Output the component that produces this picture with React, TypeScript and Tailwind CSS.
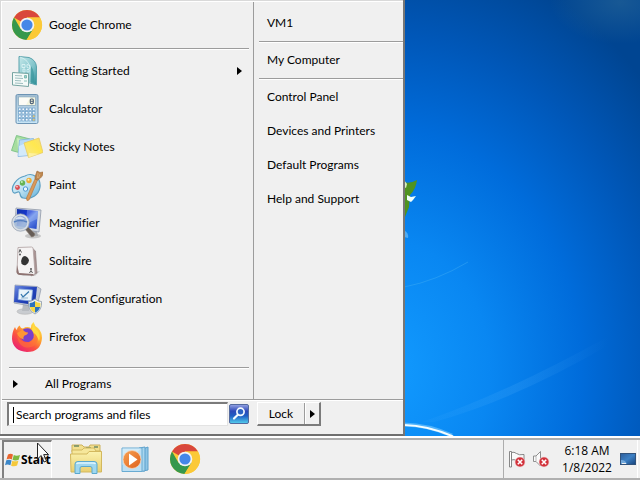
import type { ReactNode } from 'react';

function ChromeIcon() {
  return (
    <svg viewBox="0 0 32 32" className="w-8 h-8 shrink-0" aria-hidden="true">
      <circle cx="16" cy="16" r="15" fill="#fbc937" />
      <path d="M16 16 3 8.500A15 15 0 0 1 29 8.500H16Z" fill="#d9473c" />
      <path d="M3 8.500A15 15 0 0 0 15.500 31L22.500 19.800 16 16 9.500 19.800Z" fill="#36984c" />
      <path d="M29 8.500A15 15 0 0 1 15.500 31L22.500 19.800 16 8.500Z" fill="#fbc937" />
      <circle cx="16" cy="16" r="7.300" fill="#f4f4f4" />
      <circle cx="16" cy="16" r="5.600" fill="#4587e8" />
    </svg>
  );
}

function GettingStartedIcon() {
  return (
    <svg viewBox="0 0 32 32" className="w-8 h-8 shrink-0" aria-hidden="true">
      <defs>
        <linearGradient id="gs" x1="0" y1="0" x2="1" y2="1">
          <stop offset="0" stopColor="#c5e8ea" />
          <stop offset="0.600" stopColor="#7fc3ca" />
          <stop offset="1" stopColor="#298b93" />
        </linearGradient>
      </defs>
      <path d="M8 1.500 18 2.500Q25 5 25.500 12V30L19 28 8 24Z" fill="url(#gs)" stroke="#5aa3ad" strokeWidth="1" />
      <path d="M19 28V13Q18 5 9 2" fill="none" stroke="#dff4f5" strokeWidth="1" opacity="0.700" />
      <path d="M20 11Q24 16 23 28L19.500 27Z" fill="#3a959c" opacity="0.700" />
      <path d="M11 9.500h3v3h-3zM16 9.500l3 1v3l-3-1zM12 14h2v3h-2zM16 14.500h2v2.500h-2z" fill="none" stroke="#e2f6f7" strokeWidth="0.800" />
      <path d="M1.500 17.500 17.500 18.500V31.500L1.500 30Z" fill="#f4faf8" stroke="#77a5a2" strokeWidth="1" />
      <path d="M4 20.500l7 .400M4 23l8 .500M4 25.500l6 .400M4 28l8 .500" stroke="#88aeb0" strokeWidth="0.800" />
      <path d="M13.500 20.500h2v2.500h-2zM13 26h3" stroke="#6fb2aa" strokeWidth="0.800" fill="#9ed0ca" />
    </svg>
  );
}

function CalculatorIcon() {
  return (
    <svg viewBox="0 0 32 32" className="w-8 h-8 shrink-0" aria-hidden="true">
      <defs>
        <linearGradient id="calc" x1="0" y1="0" x2="0" y2="1">
          <stop offset="0" stopColor="#a2bed2" />
          <stop offset="1" stopColor="#c9e6f7" />
        </linearGradient>
      </defs>
      <rect x="5" y="1.500" width="22" height="29" rx="1.500" fill="url(#calc)" stroke="#6d94b4" />
      <rect x="7.500" y="4" width="17" height="8.500" fill="#f4f5df" stroke="#8eacc0" strokeWidth="0.800" />
      <path d="M8 4.500h11l-4 7.500H8Z" fill="#fff" opacity="0.700" />
      <rect x="19.300" y="6" width="3" height="4.600" rx="1" fill="none" stroke="#53657a" strokeWidth="1.200" />
      <path d="M19.500 8.300h2.600" stroke="#53657a" />
      {[15, 18.5, 22, 25.5].map((y) =>
        [7.5, 11, 14.5, 18, 21.5].map((x) => (
          <rect key={`${x}-${y}`} x={x} y={y} width="2.500" height="2.500" fill={x > 20 && y > 21 ? '#e8c873' : '#f5fbff'} stroke="#6fa0c8" strokeWidth="0.700" />
        ))
      )}
    </svg>
  );
}

function StickyNotesIcon() {
  return (
    <svg viewBox="0 0 32 32" className="w-8 h-8 shrink-0" aria-hidden="true">
      <defs>
        <linearGradient id="sn" x1="0" y1="1" x2="1" y2="0">
          <stop offset="0" stopColor="#f8e88c" />
          <stop offset="0.600" stopColor="#ffe84f" />
          <stop offset="1" stopColor="#f7dc75" />
        </linearGradient>
      </defs>
      <path d="M5.500 4.500 19 8 15 23.500.500 19.500Z" fill="#a7dda0" stroke="#71bd7e" strokeWidth="0.800" />
      <path d="M6 7 16 10 7 18Z" fill="#c9efbd" />
      <path d="M8.500 9 22.500 7.500 23 24 7 25.500Z" fill="#b6daf6" stroke="#83b5e2" strokeWidth="0.800" />
      <path d="M8 15 15 12 18 24 7.500 25Z" fill="#d3eafb" />
      <path d="M13 12 28 7 32 21.500 17.500 26.500Z" fill="url(#sn)" stroke="#e7ca62" strokeWidth="0.800" />
      <path d="M17.500 26.500 18 22 28 22.800Z" fill="#fff5b1" opacity="0.700" />
    </svg>
  );
}

function PaintIcon() {
  return (
    <svg viewBox="0 0 32 32" className="w-8 h-8 shrink-0" aria-hidden="true">
      <defs>
        <linearGradient id="pal" x1="0" y1="0" x2="1" y2="1">
          <stop offset="0" stopColor="#e3f4fb" />
          <stop offset="0.500" stopColor="#bce1f2" />
          <stop offset="1" stopColor="#5daed8" />
        </linearGradient>
      </defs>
      <path d="M14 7C21 3 30 8 29 18 28 26 20 31 12 29 8 28 10 24 8 23 6 22 4 26 2 23-.500 18 5 9 14 7Z" fill="url(#pal)" stroke="#5c9fc3" strokeWidth="1.200" />
      <circle cx="6.500" cy="18.500" r="2.400" fill="#d94c52" />
      <circle cx="6" cy="17.700" r="0.900" fill="#ffc9c5" />
      <circle cx="11.500" cy="14" r="2.700" fill="#66b353" />
      <circle cx="10.800" cy="13" r="1" fill="#c9f0b8" />
      <circle cx="18" cy="11.500" r="2.700" fill="#efad35" />
      <circle cx="17.500" cy="10.700" r="1" fill="#fff0b8" />
      <circle cx="14.500" cy="20" r="2.200" fill="#e9f6fd" stroke="#4b96d0" strokeWidth="1" />
      <path d="M24 10 26.500 11 18 31 16 31.500 15.500 29Z" fill="#d99a5b" stroke="#b87840" strokeWidth="0.700" />
      <path d="M24 8 26 2 29 3.500 32 3Q33 7 27 11L24 10Z" fill="#bd864f" stroke="#9f6c3b" strokeWidth="0.600" />
      <path d="M27 4 26.500 9M29 5 27.500 9" stroke="#e2b785" strokeWidth="0.700" />
    </svg>
  );
}

function MagnifierIcon() {
  return (
    <svg viewBox="0 0 32 32" className="w-8 h-8 shrink-0" aria-hidden="true">
      <defs>
        <linearGradient id="mag" x1="0" y1="0" x2="1" y2="1">
          <stop offset="0" stopColor="#1233a4" />
          <stop offset="0.400" stopColor="#1736d4" />
          <stop offset="0.550" stopColor="#6c90ec" />
          <stop offset="1" stopColor="#1d42c4" />
        </linearGradient>
      </defs>
      <ellipse cx="22" cy="29" rx="8" ry="2.500" fill="#c6c6c6" />
      <path d="M18 23 26 24 27 29 20 29Z" fill="#a9acb0" />
      <path d="M5 1 30 3 28 25 4 21Z" fill="#d4dae2" stroke="#8f98a8" strokeWidth="0.800" />
      <path d="M6 2 27 4 25.500 22 5.500 19Z" fill="url(#mag)" />
      <path d="M16 3 27 4 26 12 15 17Z" fill="#b6cff6" opacity="0.350" />
      <path d="M14 22 17 20 24 27Q23.500 30 20.500 30Z" fill="#665d57" stroke="#8d8177" strokeWidth="0.600" />
      <circle cx="9.500" cy="15.500" r="7.800" fill="#a8bed9" fillOpacity="0.850" stroke="#d8dde3" strokeWidth="2" />
      <circle cx="9.500" cy="15.500" r="8.700" fill="none" stroke="#8e9bac" strokeWidth="0.700" />
      <path d="M3 15Q9 12 16 15" fill="none" stroke="#557fc0" strokeWidth="1.500" />
      <path d="M4 12Q9 7 14 12Z" fill="#edf4fc" opacity="0.700" />
    </svg>
  );
}

function SolitaireIcon() {
  return (
    <svg viewBox="0 0 32 32" className="w-8 h-8 shrink-0" aria-hidden="true">
      <path d="M17 28 29 26 24 31 10 31Z" fill="#cdcdcd" />
      <path d="M21 3 24.500 6 26 28 20 31Z" fill="#a99493" stroke="#8c7878" strokeWidth="0.600" />
      <path d="M7 2.500 20.500 2Q22 2 22.200 4L24 28Q24 30 22 30L8 29Q6 28.500 6 27Z" fill="#f5f3f3" stroke="#ae9fa0" strokeWidth="0.800" />
      <path d="M6 20 5.500 27Q6 30 9 30L23 30.500 22 29 8 28Z" fill="#8e7371" />
      <path d="M14 11Q17.500 12 18 15.500 17.500 19 15 20 12 21 10.500 18.500 9.500 16 11 13 12 11 14 11Z" fill="#343434" />
      <path d="M9 4.500 10.500 7.500M9 4.500 8 7.500M20 25.500 18.500 28M20 25.500 21.500 28" stroke="#444" strokeWidth="0.900" />
      <circle cx="9" cy="9.500" r="1" fill="#555" />
      <circle cx="20" cy="24" r="1" fill="#555" />
    </svg>
  );
}

function SystemConfigIcon() {
  return (
    <svg viewBox="0 0 32 32" className="w-8 h-8 shrink-0" aria-hidden="true">
      <defs>
        <linearGradient id="sys" x1="0" y1="0" x2="1" y2="1">
          <stop offset="0" stopColor="#6f8ce0" />
          <stop offset="0.500" stopColor="#2545bd" />
          <stop offset="1" stopColor="#1432a0" />
        </linearGradient>
      </defs>
      <ellipse cx="14" cy="28.500" rx="8" ry="2.800" fill="#c9ccd0" stroke="#aaa" strokeWidth="0.500" />
      <path d="M12 21 18 22 18 28 11 28Z" fill="#b7bbc0" />
      <path d="M4 2 26 3.500 30 6 26 24 3 20Z" fill="#c9ced7" stroke="#8d97a8" strokeWidth="0.700" />
      <path d="M4 2.500 26 4 24 22 3 19Z" fill="url(#sys)" />
      <path d="M8 6 21.500 7 20.500 18 7 16.500Z" fill="#e9f3fa" stroke="#8daee1" strokeWidth="0.800" />
      <path d="M10 11 12 14 18 8.500" fill="none" stroke="#3778ae" strokeWidth="1.300" />
      <path d="M10 15h7" stroke="#7da7c6" strokeWidth="0.800" />
      <path d="M24 16Q27 18.500 30.500 18.500 31.500 27 24 31 16.500 27 17.500 18.500 21 18.500 24 16Z" fill="#eef2f5" stroke="#8a98a5" strokeWidth="0.800" />
      <path d="M24 18V24H18.800Q18.400 22 18.700 20Q21.500 20 24 18ZM24 24H29.200Q28 28 24 29.700Z" fill="#2b72bd" />
      <path d="M24 18V24H29.200Q29.600 22 29.300 20 26.500 20 24 18ZM24 24H18.800Q20 28 24 29.700Z" fill="#f5d846" />
    </svg>
  );
}

function FirefoxIcon() {
  return (
    <svg viewBox="0 0 32 32" className="w-8 h-8 shrink-0" aria-hidden="true">
      <defs>
        <linearGradient id="ff" x1="0.850" y1="0.050" x2="0.200" y2="0.950">
          <stop offset="0" stopColor="#ffe84a" />
          <stop offset="0.350" stopColor="#ffa72d" />
          <stop offset="0.650" stopColor="#fb5241" />
          <stop offset="1" stopColor="#ea2074" />
        </linearGradient>
      </defs>
      <path d="M4 6Q4.500 8 6 9 6 6 9 4.500 9 7 12 7.500 16 5 20 7 20 3 22.500 1 23.500 5 27 7 31 11 31 17 30 31 16 31 2 30 1 18 1 11 4 6Z" fill="url(#ff)" />
      <path d="M12 8.500Q19 5 22 11 25 18 18 21 11 21.500 9.500 16 11 12 12 8.500Z" fill="#7a41cb" />
      <path d="M12 8.500Q13 11 17 11.500 17 13.500 13.500 14.500 11.500 17 13 18.500 7 17 6 12 8 11 12 8.500Z" fill="#ff9634" />
      <path d="M6 12Q8 22 18 21.500 24 20 23.500 12 29 17 25 23 20 28 13 26 6 23 6 12Z" fill="#ff7139" opacity="0.600" />
      <path d="M23 3Q23 7 27 10 30 15 28 20 26 14 23 12 19 8 23 3Z" fill="#ffdc42" />
    </svg>
  );
}

function ExplorerIcon() {
  return (
    <svg viewBox="0 0 34 32" className="w-[34px] h-8" aria-hidden="true">
      <defs>
        <linearGradient id="fold" x1="0" y1="0" x2="0" y2="1">
          <stop offset="0" stopColor="#fbf2ae" />
          <stop offset="1" stopColor="#e9cf70" />
        </linearGradient>
      </defs>
      <path d="M3 5V2H13L15 4H20L21 2H31V9H3Z" fill="#f2df8e" stroke="#ccb15c" />
      <path d="M5 3h5M17 5h5M25 4h4" stroke="#6c8b64" strokeWidth="1.500" />
      <path d="M3 7H13L15 5H25L27 8H32V27H3Z" fill="#f6e79b" stroke="#d1b861" />
      <path d="M1.500 11H18L20 8.500H32.500V29H2Z" fill="url(#fold)" stroke="#d3b85e" />
      <path d="M6 30.500V21Q6 18.500 9 18.500H25Q28 18.500 28 21V30.500H23V25Q23 23.500 21 23.500H13Q11 23.500 11 25V30.500Z" fill="#9fd7ef" stroke="#5ba9ce" />
      <path d="M7.500 21Q8 20 10 20H24Q26 20 26.500 21" fill="none" stroke="#ddf5ff" strokeWidth="1.300" />
    </svg>
  );
}

function MediaPlayerIcon() {
  return (
    <svg viewBox="0 0 32 32" className="w-8 h-8" aria-hidden="true">
      <defs>
        <linearGradient id="wmp" x1="0" y1="0" x2="1" y2="1">
          <stop offset="0" stopColor="#f6a152" />
          <stop offset="1" stopColor="#df601c" />
        </linearGradient>
      </defs>
      <path d="M23 6 28 4V27L23 28Z" fill="#8fc6e6" stroke="#5da0cb" />
      <path d="M19 5 25 4V28L19 28.500Z" fill="#a9d6ef" stroke="#5da0cb" />
      <path d="M2 5H22V28.500H2Z" fill="#bddff3" stroke="#69abd2" />
      <path d="M2.500 5.500H21L2.500 22Z" fill="#dceffa" opacity="0.700" />
      <circle cx="12" cy="16.500" r="9" fill="url(#wmp)" stroke="#f6d3b7" strokeWidth="0.800" />
      <path d="M9 10.500 17.500 16.500 9 22.500Z" fill="#fff" />
    </svg>
  );
}

function WindowsLogo() {
  return (
    <svg viewBox="0 0 16 16" className="w-4 h-4 shrink-0" aria-hidden="true">
      <path d="M3 2.500Q5.500 1 8 2.500L6.800 7.500Q4.500 6 1.500 7.500Z" fill="#e9652d" />
      <path d="M8.800 3Q11.500 4.500 15 3L13.700 7.700Q10.500 9.300 7.500 7.800Z" fill="#7eb83e" />
      <path d="M1.300 8.300Q4 7 6.600 8.400L5.400 13.300Q2.500 12 0 13.200Z" fill="#3b87c9" />
      <path d="M7.300 8.700Q10 10 13.400 8.700L12.100 13.600Q9 15 6.100 13.700Z" fill="#f5c93b" />
    </svg>
  );
}

function SearchIcon() {
  return (
    <svg viewBox="0 0 20 20" className="w-5 h-5" aria-hidden="true">
      <defs>
        <linearGradient id="srch" x1="0" y1="0" x2="0" y2="1">
          <stop offset="0" stopColor="#97a5e4" />
          <stop offset="0.350" stopColor="#2c48b8" />
          <stop offset="0.600" stopColor="#1f5fc4" />
          <stop offset="1" stopColor="#55d1ee" />
        </linearGradient>
      </defs>
      <rect x="0.500" y="0.500" width="19" height="19" rx="1.500" fill="url(#srch)" stroke="#536a9f" />
      <circle cx="11.500" cy="7.800" r="3.600" fill="#2c62c3" stroke="#f4faff" strokeWidth="1.700" />
      <path d="M8.800 10.800 5 14.500" stroke="#f4faff" strokeWidth="2.200" strokeLinecap="round" />
    </svg>
  );
}

function ErrorBadge() {
  return (
    <>
      <circle cx="12" cy="12" r="5" fill="#d2313a" stroke="#f2d6d8" strokeWidth="0.600" />
      <path d="M9.800 9.800 14.200 14.200M14.200 9.800 9.800 14.200" stroke="#fff" strokeWidth="1.600" />
    </>
  );
}

function FlagIcon() {
  return (
    <svg viewBox="0 0 18 18" className="w-[18px] h-[18px]" aria-hidden="true">
      <path d="M1.500 1.500H3.500V17H1.500Z" fill="#fff" stroke="#7b7b7b" strokeWidth="0.900" />
      <path d="M3.500 2.500Q6 1.500 8.500 3.500 11 5.500 16 4.500V11Q11 12 8.500 10.500 6 9 3.500 10Z" fill="#fafafa" stroke="#7b7b7b" strokeWidth="0.900" />
      <ErrorBadge />
    </svg>
  );
}

function SpeakerIcon() {
  return (
    <svg viewBox="0 0 18 18" className="w-[18px] h-[18px]" aria-hidden="true">
      <path d="M1.500 6H4L8.500 1.500V16L4 11.500H1.500Z" fill="#fafafa" stroke="#858585" strokeWidth="0.900" />
      <path d="M4 6V11.500" stroke="#aaa" strokeWidth="0.800" />
      <ErrorBadge />
    </svg>
  );
}

function DesktopIcon() {
  return (
    <svg viewBox="0 0 16 14" className="w-4 h-3.5" aria-hidden="true">
      <defs>
        <linearGradient id="desk" x1="0" y1="0" x2="1" y2="1">
          <stop offset="0" stopColor="#2c5d9b" />
          <stop offset="0.500" stopColor="#3d80c4" />
          <stop offset="1" stopColor="#16427b" />
        </linearGradient>
      </defs>
      <rect x="0.500" y="1.500" width="15" height="11" fill="url(#desk)" stroke="#31527b" />
      <path d="M1 8Q5 7.500 7 12H1Z" fill="#97c7ef" opacity="0.600" />
      <path d="M2 11.500h4" stroke="#eee" />
    </svg>
  );
}

function Cursor() {
  return (
    <svg viewBox="0 0 13 21" className="absolute left-8 top-0 w-[13px] h-[21px] pointer-events-none" aria-hidden="true">
      <path d="M1.500 1V17L5.200 13.500 8 20 10.500 19 7.700 12.600H12.500Z" fill="#fff" fillOpacity="0.700" stroke="#222" strokeWidth="1" />
    </svg>
  );
}

function Arrow() {
  return (
    <svg viewBox="0 0 5 8" className="w-[5px] h-2 shrink-0" aria-hidden="true">
      <path d="M0 0 5 4 0 8Z" fill="#000" />
    </svg>
  );
}

function Separator() {
  return <hr className="h-0.5 border-0 border-t border-t-[#9c9c9c] bg-white" />;
}

function Wallpaper() {
  return (
    <svg viewBox="0 0 236 436" preserveAspectRatio="xMinYMax slice" className="absolute inset-y-0 right-0 left-[404px] h-full w-[calc(100%-404px)]" aria-hidden="true">
      <defs>
        <linearGradient id="ray" x1="0" y1="0" x2="1" y2="0">
          <stop offset="0" stopColor="#6cc0ff" stopOpacity="0.050" />
          <stop offset="0.500" stopColor="#6cc0ff" stopOpacity="0.140" />
          <stop offset="1" stopColor="#6cc0ff" stopOpacity="0" />
        </linearGradient>
        <radialGradient id="haze">
          <stop offset="0" stopColor="#3b7598" stopOpacity="0.400" />
          <stop offset="1" stopColor="#3b7598" stopOpacity="0" />
        </radialGradient>
      </defs>
      <ellipse cx="216" cy="2" rx="70" ry="42" fill="url(#haze)" />
      <path d="M18 422Q105 392 205 336L203 346Q110 400 30 422Z" fill="url(#ray)" />
      <path d="M0 287Q32 281 64 262" fill="none" stroke="#50b7f4" strokeWidth="1" opacity="0.350" />
      <path d="M0 182Q6 184 13 180 12 189 6 195L5 207 1 217H0Z" fill="#4f9320" />
      <path d="M0 180 3 184 2 188 0 187Z" fill="#d8efc0" />
      <path d="M3 195 7 197 12 196 9 200 7 202 3 200Z" fill="#effffb" />
      <path d="M0 230Q5 233 4 238L0 237Z" fill="#6dbcf4" opacity="0.700" />
      <path d="M0 424.500Q24 425 48 435.500" fill="none" stroke="#8fd6ff" strokeWidth="4" opacity="0.500" />
      <path d="M0 425Q24 425.500 49 436.500" fill="none" stroke="#f4fdff" strokeWidth="2" />
    </svg>
  );
}

interface Program {
  name: string;
  icon: ReactNode;
  submenu?: boolean;
}

const programs: Program[] = [
  { name: 'Getting Started', icon: <GettingStartedIcon />, submenu: true },
  { name: 'Calculator', icon: <CalculatorIcon /> },
  { name: 'Sticky Notes', icon: <StickyNotesIcon /> },
  { name: 'Paint', icon: <PaintIcon /> },
  { name: 'Magnifier', icon: <MagnifierIcon /> },
  { name: 'Solitaire', icon: <SolitaireIcon /> },
  { name: 'System Configuration', icon: <SystemConfigIcon /> },
  { name: 'Firefox', icon: <FirefoxIcon /> },
];

const places = ['Control Panel', 'Devices and Printers', 'Default Programs', 'Help and Support'];

function ProgramItem({ name, icon, submenu }: Program) {
  return (
    <button type="button" className="flex h-[38px] w-full items-center gap-1.5 pl-[9px] pr-[11px] text-left">
      {icon}
      <span className="flex-1">{name}</span>
      {submenu && <Arrow />}
    </button>
  );
}

function PlaceItem({ name }: { name: string }) {
  return (
    <button type="button" className="flex h-[34px] w-full items-center pl-3 text-left">
      {name}
    </button>
  );
}

function StartMenu() {
  return (
    <div className="absolute bottom-0 left-0 w-[405px] border-r-2 border-b-2 border-r-[#767676] border-b-[#6f6f6f] bg-[#d9d9d9] pt-px pl-px">
      <div className="border-t border-l border-white bg-[#f0f0f0]">
        <div className="flex">
          <div className="w-[251px] pt-1">
            <ProgramItem name="Google Chrome" icon={<ChromeIcon />} />
            <div className="pt-1 pb-0.5 pl-[7px] pr-1">
              <Separator />
            </div>
            {programs.map((program) => (
              <ProgramItem key={program.name} {...program} />
            ))}
            <div className="pt-[11px] pl-[7px] pr-1">
              <Separator />
            </div>
            <button type="button" className="flex h-[30px] w-full items-center gap-[27px] pl-[11px] text-left">
              <Arrow />
              All Programs
            </button>
          </div>

          <div className="flex-1 border-l border-[#9c9c9c] pt-1 pl-px">
            <PlaceItem name="VM1" />
            <div className="pt-px pl-1">
              <Separator />
            </div>
            <PlaceItem name="My Computer" />
            <div className="pt-px pl-1">
              <Separator />
            </div>
            {places.map((name) => (
              <PlaceItem key={name} name={name} />
            ))}
          </div>
        </div>

        <Separator />
        <div className="flex items-start pt-px pb-2 pl-[5px]">
          <label className="flex h-6 w-[221px] items-center border border-t-2 border-l-2 border-[#e3e3e3] border-t-[#7b7b7b] border-l-[#7b7b7b] bg-white pl-1">
            <span className="h-4 w-px bg-black" />
            <input
              type="text"
              aria-label="Search programs and files"
              placeholder="Search programs and files"
              className="w-full min-w-0 bg-transparent pl-0.5 outline-none placeholder:text-black placeholder:opacity-100"
            />
          </label>
          <button type="button" aria-label="Search" className="mt-0.5 ml-px">
            <SearchIcon />
          </button>
          <div className="ml-2 flex h-6 border border-r-2 border-b-2 border-white border-r-[#7b7b7b] border-b-[#7b7b7b]">
            <button type="button" className="w-[47px] border-r border-[#9c9c9c]">
              Lock
            </button>
            <button type="button" aria-label="Shut down options" className="flex w-3.5 items-center justify-center border-l border-white">
              <Arrow />
            </button>
          </div>
        </div>
      </div>
    </div>
  );
}

function Taskbar() {
  return (
    <footer className="flex h-11 items-stretch border-t-2 border-b-2 border-t-white border-b-[#b0b0b0] bg-[#f0f0f0]">
      <div className="flex flex-1 items-stretch border-t-2 border-[#adadad]">
        <button type="button" className="relative ml-0.5 flex w-[50px] items-center border-t-2 border-l-2 border-r border-[#808080] border-r-white pl-px font-['Open_Sans',sans-serif] font-bold">
          <WindowsLogo />
          <span>Start</span>
          <Cursor />
        </button>
        <div className="flex flex-1 items-center gap-[17px] pl-[17px]">
          <button type="button" aria-label="Windows Explorer">
            <ExplorerIcon />
          </button>
          <button type="button" aria-label="Windows Media Player">
            <MediaPlayerIcon />
          </button>
          <button type="button" aria-label="Google Chrome">
            <ChromeIcon />
          </button>
        </div>
        <div className="mr-0.5 flex items-center border-l border-r border-[#adadad] border-r-white pl-1">
          <button type="button" aria-label="Action Center">
            <FlagIcon />
          </button>
          <button type="button" aria-label="Volume" className="ml-1.5">
            <SpeakerIcon />
          </button>
          <time className="ml-3 w-[50px] text-center font-['Open_Sans',sans-serif] leading-[17px]">
            6:18 AM
            <br />
            1/8/2022
          </time>
          <button type="button" aria-label="Show desktop" className="ml-2 mr-px">
            <DesktopIcon />
          </button>
        </div>
      </div>
    </footer>
  );
}

export default function App() {
  return (
    <div className="flex h-screen flex-col overflow-hidden font-['Lato','Open_Sans',sans-serif] text-[12px] leading-4 text-black [font-variant-ligatures:none]">
      <main className="relative flex-1 bg-[radial-gradient(ellipse_350px_430px_at_385px_370px,#129bff_0%,#0987f2_30%,#006cdb_56%,#0057b8_78%,#004592_100%)]">
        <Wallpaper />
        <StartMenu />
      </main>
      <Taskbar />
    </div>
  );
}
